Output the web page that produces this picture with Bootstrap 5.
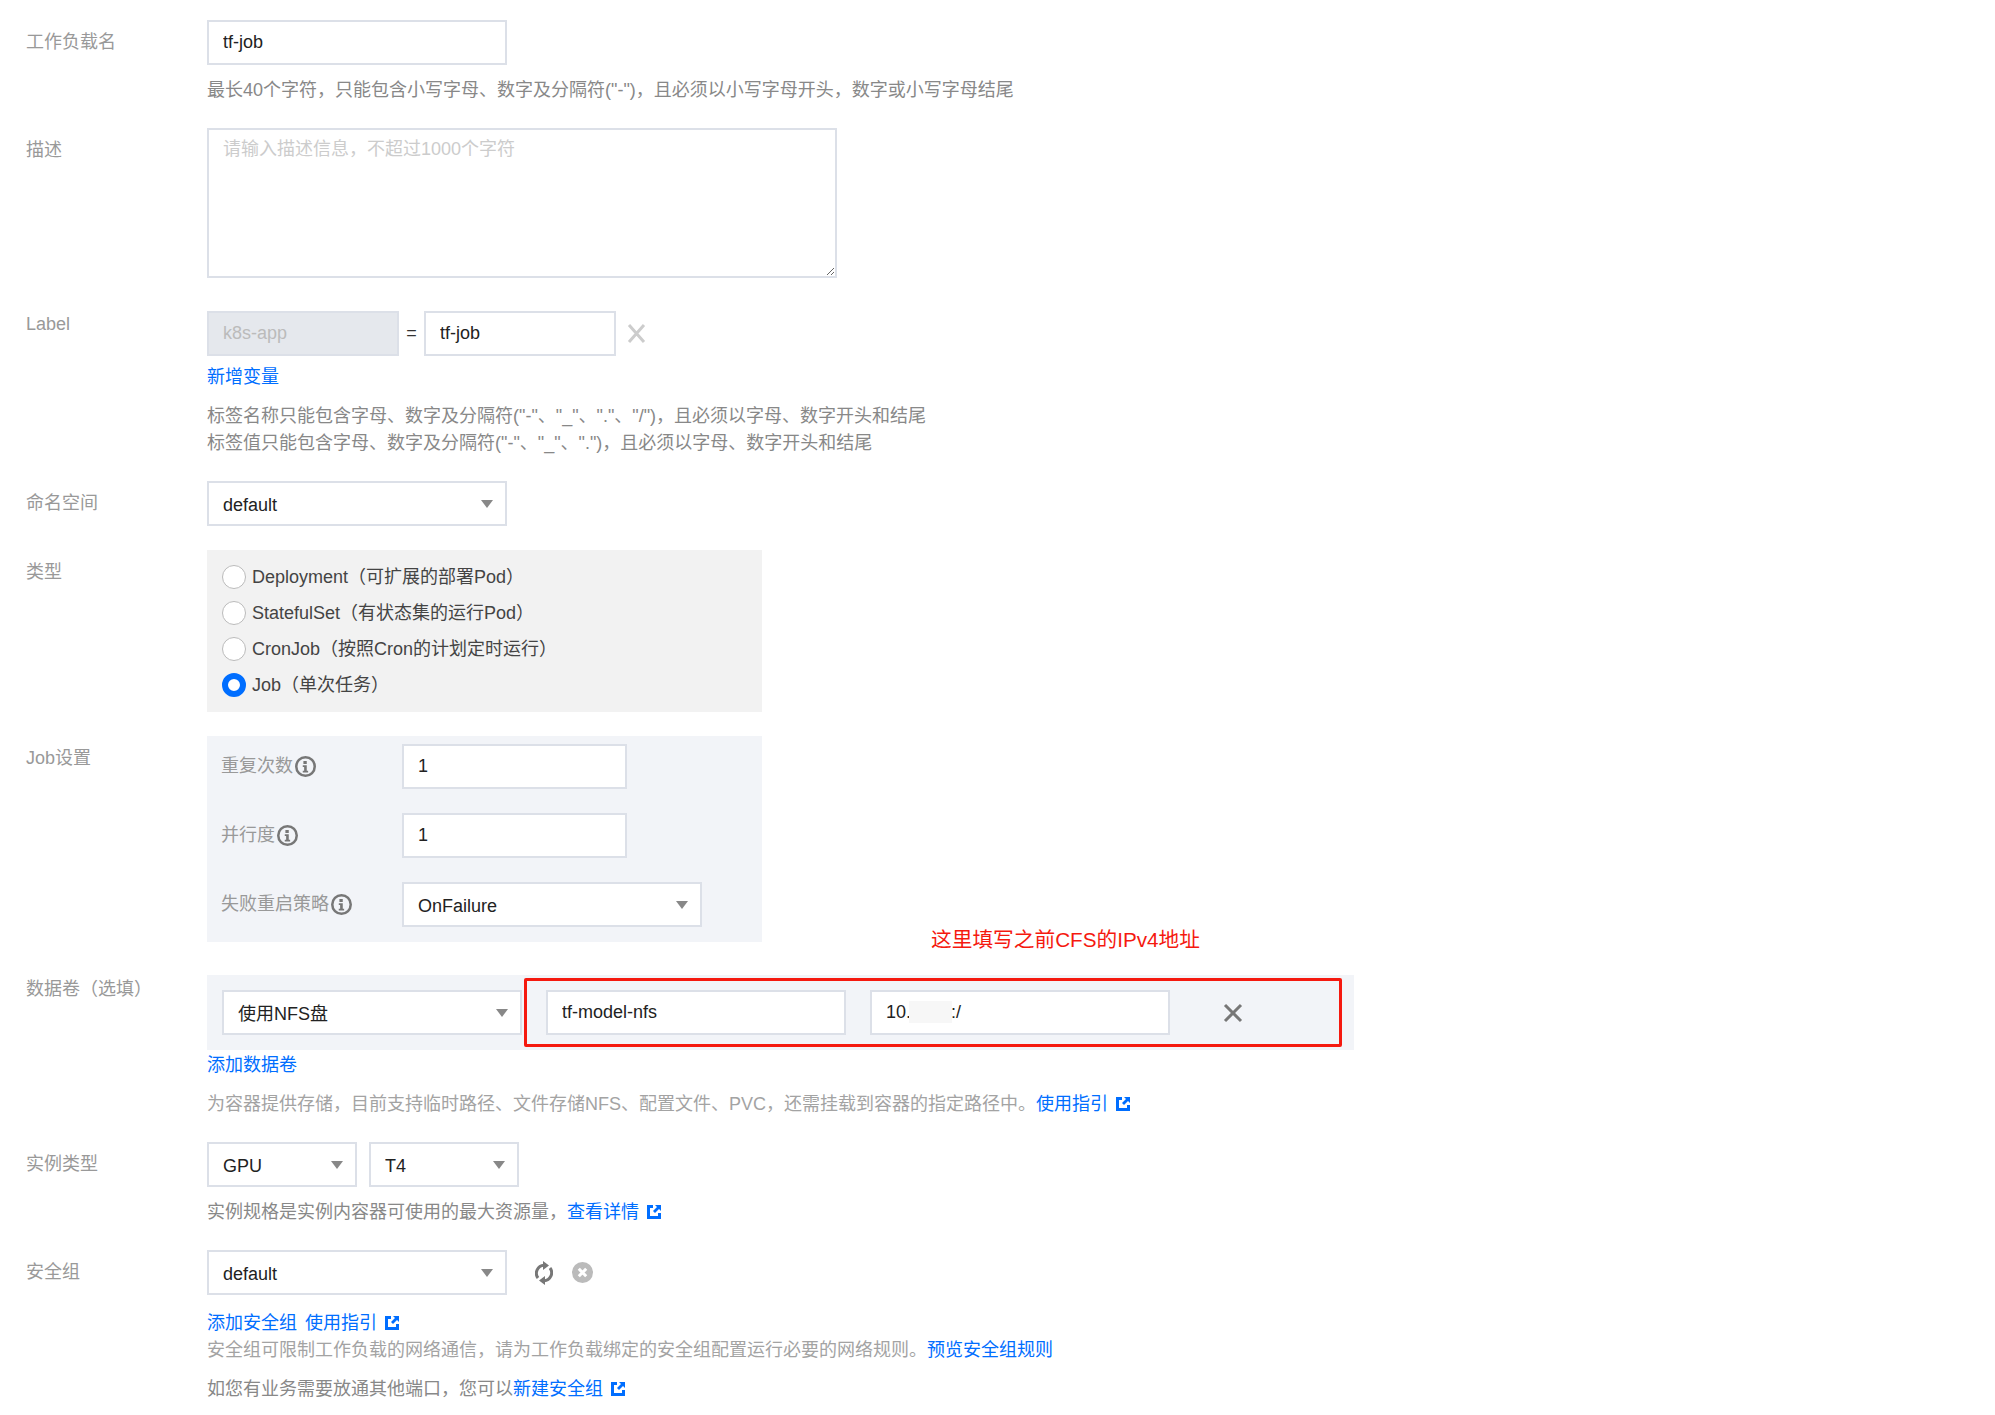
<!DOCTYPE html>
<html lang="zh-CN">
<head>
<meta charset="utf-8">
<title>工作负载</title>
<link rel="stylesheet" href="https://cdn.jsdelivr.net/npm/bootstrap@5.3.0/dist/css/bootstrap.min.css">
<style>
body{background:#fff;font-family:"Liberation Sans","Noto Sans CJK SC",sans-serif;font-size:18px;line-height:27px;color:#888}
.page-wrap{padding-top:20px;width:1995px}
.frow{display:flex;margin-bottom:24px}
.frow.far{margin-bottom:33px}
.flabel{width:207px;flex:none;padding-left:26px;padding-top:9px;color:#999}
.flabel.flat{padding-top:0}
.flabel.flat1{padding-top:1px}
.fbody{flex:1;min-width:0}
.form-control,.form-select{font-size:18px;line-height:27px;height:45px;padding:8px 14px;border:2px solid #dce0e8;border-radius:0;color:#222;box-shadow:none}
.form-control:disabled{background:#e5e8ed;color:#bbb;opacity:1}
textarea.form-control{height:150px;width:630px;resize:both;padding-top:6px}
textarea.form-control::placeholder{color:#ccc}
.form-select{padding:9px 30px 7px 14px;background-image:url("data:image/svg+xml,%3Csvg xmlns='http://www.w3.org/2000/svg' viewBox='0 0 12 8'%3E%3Cpath fill='%23888' d='M0 0h12L6 8z'/%3E%3C/svg%3E");background-position:right 12px center;background-size:12px 8px}
.w300{width:300px}.w225{width:225px}.w192{width:192px}.w150{width:150px}
.hint{color:#888;margin-top:12px}
.hint-faint{color:#a3a3a3}
.hint-tight{margin-top:0}
.hint-gap{margin-top:12px}
.linkline{margin-top:8px}
.linkline-near{margin-top:2px}
.linkline-mid{margin-top:15px}
a.lnk{color:#006eff;text-decoration:none}
.ext{width:16px;height:16px;margin-left:7px;vertical-align:-2px}
.typebox{width:555px;background:#f2f2f2;padding:9px 15px}
.radio-row{height:36px;display:flex;align-items:center;gap:6px;color:#444;margin:0;padding:0}
.form-check-input.rd{width:24px;height:24px;margin:0;float:none;flex:none;border:1px solid #bbb;background:#fff;box-shadow:none}
.form-check-input.rd:checked{border:6px solid #006eff;background:#fff}
.jobbox{width:555px;background:#f2f4f8;padding:8px 14px 15px}
.jobrow{display:flex;align-items:center;margin-bottom:24px}
.jobrow:last-child{margin-bottom:0}
.joblabel{width:181px;flex:none;display:flex;align-items:center;gap:2px;color:#999}
.ico-i{width:21px;height:21px;flex:none}
.eq{color:#333;width:25px;text-align:center}
.rm-x{width:19px;height:19px;margin-left:11px}
.databox{position:relative;width:1147px;height:75px;background:#f2f4f8;padding:15px;display:flex;gap:24px;align-items:center}
.redframe{position:absolute;left:317px;top:3px;width:818px;height:69px;border:3px solid #f5190f;border-radius:2px;pointer-events:none}
.note{position:absolute;left:724px;top:-49px;color:#f5190f;font-size:20.7px;white-space:nowrap}
.mask{position:absolute;left:702px;top:26px;width:43px;height:22px;background:#f7f7f7}
.rm-dark{width:20px;height:20px;margin-left:29px}
.sec-icons{gap:19px}
.ico-r{width:18px;height:24px;margin-left:9px}
.ico-c{width:21px;height:21px}
</style>
</head>
<body>
<div class="page-wrap">

<div class="frow">
  <div class="flabel">工作负载名</div>
  <div class="fbody">
    <input class="form-control w300" type="text" value="tf-job">
    <div class="hint">最长40个字符，只能包含小写字母、数字及分隔符("-")，且必须以小写字母开头，数字或小写字母结尾</div>
  </div>
</div>

<div class="frow far">
  <div class="flabel">描述</div>
  <div class="fbody">
    <textarea class="form-control" placeholder="请输入描述信息，不超过1000个字符"></textarea>
  </div>
</div>

<div class="frow">
  <div class="flabel flat">Label</div>
  <div class="fbody">
    <div class="d-flex align-items-center">
      <input class="form-control w192" type="text" value="k8s-app" disabled>
      <span class="eq">=</span>
      <input class="form-control w192" type="text" value="tf-job">
      <svg class="rm-x" viewBox="0 0 19 19"><path d="M2 1l15 17M17 1L2 18" stroke="#ccc" stroke-width="3" fill="none"/></svg>
    </div>
    <div class="linkline"><a class="lnk" href="#">新增变量</a></div>
    <div class="hint">标签名称只能包含字母、数字及分隔符("-"、"_"、"."、"/")，且必须以字母、数字开头和结尾<br>标签值只能包含字母、数字及分隔符("-"、"_"、".")，且必须以字母、数字开头和结尾</div>
  </div>
</div>

<div class="frow">
  <div class="flabel">命名空间</div>
  <div class="fbody">
    <select class="form-select w300"><option>default</option></select>
  </div>
</div>

<div class="frow">
  <div class="flabel">类型</div>
  <div class="fbody">
    <div class="typebox">
      <label class="radio-row"><input class="form-check-input rd" type="radio" name="kind">Deployment（可扩展的部署Pod）</label>
      <label class="radio-row"><input class="form-check-input rd" type="radio" name="kind">StatefulSet（有状态集的运行Pod）</label>
      <label class="radio-row"><input class="form-check-input rd" type="radio" name="kind">CronJob（按照Cron的计划定时运行）</label>
      <label class="radio-row"><input class="form-check-input rd" type="radio" name="kind" checked>Job（单次任务）</label>
    </div>
  </div>
</div>

<div class="frow far">
  <div class="flabel">Job设置</div>
  <div class="fbody">
    <div class="jobbox">
      <div class="jobrow">
        <div class="joblabel">重复次数<svg class="ico-i" viewBox="0 0 20 20"><circle cx="10" cy="10" r="8.8" fill="none" stroke="#777" stroke-width="2.4"/><path d="M8 4.8h3.2v2.8H8zM7.4 8.8h3.8v5.2h1.3v1.6H7.4V14h1.3v-3.6H7.4z" fill="#777"/></svg></div>
        <input class="form-control w225" type="text" value="1">
      </div>
      <div class="jobrow">
        <div class="joblabel">并行度<svg class="ico-i" viewBox="0 0 20 20"><circle cx="10" cy="10" r="8.8" fill="none" stroke="#777" stroke-width="2.4"/><path d="M8 4.8h3.2v2.8H8zM7.4 8.8h3.8v5.2h1.3v1.6H7.4V14h1.3v-3.6H7.4z" fill="#777"/></svg></div>
        <input class="form-control w225" type="text" value="1">
      </div>
      <div class="jobrow">
        <div class="joblabel">失败重启策略<svg class="ico-i" viewBox="0 0 20 20"><circle cx="10" cy="10" r="8.8" fill="none" stroke="#777" stroke-width="2.4"/><path d="M8 4.8h3.2v2.8H8zM7.4 8.8h3.8v5.2h1.3v1.6H7.4V14h1.3v-3.6H7.4z" fill="#777"/></svg></div>
        <select class="form-select w300"><option>OnFailure</option></select>
      </div>
    </div>
  </div>
</div>

<div class="frow">
  <div class="flabel flat1">数据卷（选填）</div>
  <div class="fbody">
    <div class="databox">
      <select class="form-select w300"><option>使用NFS盘</option></select>
      <input class="form-control w300" type="text" value="tf-model-nfs">
      <input class="form-control w300" type="text" value="10.        :/">
      <svg class="rm-dark" viewBox="0 0 20 20"><path d="M2 2l16 16M18 2L2 18" stroke="#777" stroke-width="3" fill="none"/></svg>
      <div class="mask"></div>
      <div class="redframe"></div>
      <div class="note">这里填写之前CFS的IPv4地址</div>
    </div>
    <div class="linkline-near"><a class="lnk" href="#">添加数据卷</a></div>
    <div class="hint hint-faint">为容器提供存储，目前支持临时路径、文件存储NFS、配置文件、PVC，还需挂载到容器的指定路径中。<a class="lnk" href="#">使用指引<svg class="ext" viewBox="0 0 16 16"><path d="M7 1H1v14h14V9h-3v3H4V4h3z" fill="#006eff"/><path d="M9 1h6v6l-2-2-4 4-2-2 4-4z" fill="#006eff"/></svg></a></div>
  </div>
</div>

<div class="frow">
  <div class="flabel">实例类型</div>
  <div class="fbody">
    <div class="d-flex gap-2">
      <select class="form-select w150"><option>GPU</option></select>
      <select class="form-select w150 ms-1"><option>T4</option></select>
    </div>
    <div class="hint">实例规格是实例内容器可使用的最大资源量，<a class="lnk" href="#">查看详情<svg class="ext" viewBox="0 0 16 16"><path d="M7 1H1v14h14V9h-3v3H4V4h3z" fill="#006eff"/><path d="M9 1h6v6l-2-2-4 4-2-2 4-4z" fill="#006eff"/></svg></a></div>
  </div>
</div>

<div class="frow">
  <div class="flabel">安全组</div>
  <div class="fbody">
    <div class="d-flex align-items-center sec-icons">
      <select class="form-select w300"><option>default</option></select>
      <svg class="ico-r" viewBox="0 0 18 24"><path d="M3 17A8 8 0 0 1 9 4.2" fill="none" stroke="#777" stroke-width="3"/><path d="M8 0l6 4.5-6 4.5z" fill="#777"/><path d="M15 7A8 8 0 0 1 9 19.8" fill="none" stroke="#777" stroke-width="3"/><path d="M10 15l-6 4.5 6 4.5z" fill="#777"/></svg>
      <svg class="ico-c" viewBox="0 0 21 21"><circle cx="10.5" cy="10.5" r="10.5" fill="#bbb"/><path d="M6.8 6.8l7.4 7.4M14.2 6.8l-7.4 7.4" stroke="#fff" stroke-width="3"/></svg>
    </div>
    <div class="linkline-mid"><a class="lnk" href="#">添加安全组</a><a class="lnk ms-2" href="#">使用指引<svg class="ext" viewBox="0 0 16 16"><path d="M7 1H1v14h14V9h-3v3H4V4h3z" fill="#006eff"/><path d="M9 1h6v6l-2-2-4 4-2-2 4-4z" fill="#006eff"/></svg></a></div>
    <div class="hint hint-tight hint-faint">安全组可限制工作负载的网络通信，请为工作负载绑定的安全组配置运行必要的网络规则。<a class="lnk" href="#">预览安全组规则</a></div>
    <div class="hint hint-gap">如您有业务需要放通其他端口，您可以<a class="lnk" href="#">新建安全组<svg class="ext" viewBox="0 0 16 16"><path d="M7 1H1v14h14V9h-3v3H4V4h3z" fill="#006eff"/><path d="M9 1h6v6l-2-2-4 4-2-2 4-4z" fill="#006eff"/></svg></a></div>
  </div>
</div>

</div>
<script src="https://cdn.jsdelivr.net/npm/bootstrap@5.3.0/dist/js/bootstrap.bundle.min.js"></script>
</body>
</html>
